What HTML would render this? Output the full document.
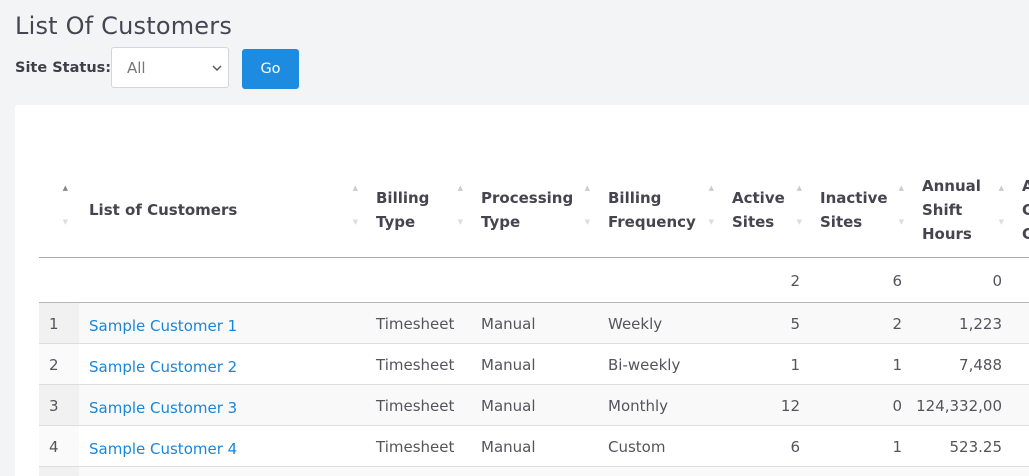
<!DOCTYPE html>
<html><head><style>
html{overflow:hidden;height:476px}
body{margin:0;width:1029px;height:476px;overflow:hidden;background:#f3f4f6;font-family:"DejaVu Sans","Liberation Sans",sans-serif;color:#47464f;position:relative}
h1{position:absolute;left:15px;top:12px;margin:0;font-weight:400;font-size:24px;color:#464653;letter-spacing:0.2px}
.lbl{position:absolute;left:15px;top:60px;font-size:14.5px;font-weight:bold;color:#3f3f4a}
.sel{position:absolute;left:111px;top:47px;width:118px;height:41px;background:#fff;border:1px solid #d4d6da;border-radius:3px;box-sizing:border-box;font-size:15px;color:#777;padding:11px 0 0 15px}
.sel svg{position:absolute;right:6px;top:17px}
.go{position:absolute;left:242px;top:49px;width:57px;height:40px;background:#1c8be0;border-radius:3px;color:#fff;font-size:14.5px;text-align:center;line-height:40px}
.card{position:absolute;left:15px;top:105px;width:1014px;height:371px;background:#fff;border-radius:3px 0 0 0;overflow:hidden}
table{position:absolute;left:24px;top:55px;width:1033px;border-collapse:collapse;table-layout:fixed;font-size:15px}
th{font-weight:bold;text-align:left;vertical-align:middle;height:95px;padding:2px 10px 0;position:relative;border-bottom:1px solid #a9a9a9;line-height:24px;color:#45444f;font-size:15px}
th .a{position:absolute;right:8px;top:16px;font-size:7px;color:#ccc}
th .b{position:absolute;right:8px;top:50px;font-size:7px;color:#ddd}
td{padding:1px 10px 0;height:39px;border-bottom:1px solid #ddd;white-space:nowrap;color:#55545c}
tr.tot td{height:43px;border-bottom:1px solid #b5b5b5}
tr.o td{background:#f9f9f9}
tr.o td.i{background:#f1f1f1}
td.i{background:#fafafa}
.r{text-align:right}
a{color:#1a86d8;text-decoration:none;position:relative;top:2px}
</style></head><body>
<h1>List Of Customers</h1>
<div class="lbl">Site Status:</div>
<div class="sel">All<svg width="10" height="7" viewBox="0 0 10 7"><path d="M1 1l4 4 4-4" fill="none" stroke="#555" stroke-width="1.4"/></svg></div>
<div class="go">Go</div>
<div class="card">
<table>
<colgroup><col style="width:40px"><col style="width:287px"><col style="width:105px"><col style="width:127px"><col style="width:124px"><col style="width:88px"><col style="width:102px"><col style="width:100px"><col style="width:60px"></colgroup>
<tr><th><span class="a" style="color:#888;right:11px">▲</span><span class="b" style="right:11px">▼</span></th><th>List of Customers<span class="a">▲</span><span class="b">▼</span></th><th>Billing<br>Type<span class="a">▲</span><span class="b">▼</span></th><th>Processing<br>Type<span class="a">▲</span><span class="b">▼</span></th><th>Billing<br>Frequency<span class="a">▲</span><span class="b">▼</span></th><th>Active<br>Sites<span class="a">▲</span><span class="b">▼</span></th><th>Inactive<br>Sites<span class="a">▲</span><span class="b">▼</span></th><th>Annual<br>Shift<br>Hours<span class="a">▲</span><span class="b">▼</span></th><th>A<br>C<br>C</th></tr>
<tr class="tot"><td></td><td></td><td></td><td></td><td></td><td class="r">2</td><td class="r">6</td><td class="r">0</td><td></td></tr>
<tr class="o"><td class="i">1</td><td><a>Sample Customer 1</a></td><td>Timesheet</td><td>Manual</td><td>Weekly</td><td class="r">5</td><td class="r">2</td><td class="r">1,223</td><td></td></tr>
<tr><td class="i">2</td><td><a>Sample Customer 2</a></td><td>Timesheet</td><td>Manual</td><td>Bi-weekly</td><td class="r">1</td><td class="r">1</td><td class="r">7,488</td><td></td></tr>
<tr class="o"><td class="i">3</td><td><a>Sample Customer 3</a></td><td>Timesheet</td><td>Manual</td><td>Monthly</td><td class="r">12</td><td class="r">0</td><td class="r" style="padding-left:0">124,332,00</td><td></td></tr>
<tr><td class="i">4</td><td><a>Sample Customer 4</a></td><td>Timesheet</td><td>Manual</td><td>Custom</td><td class="r">6</td><td class="r">1</td><td class="r">523.25</td><td></td></tr>
<tr class="o"><td class="i"></td><td></td><td></td><td></td><td></td><td></td><td></td><td></td><td></td></tr>
</table>
</div>
</body></html>
